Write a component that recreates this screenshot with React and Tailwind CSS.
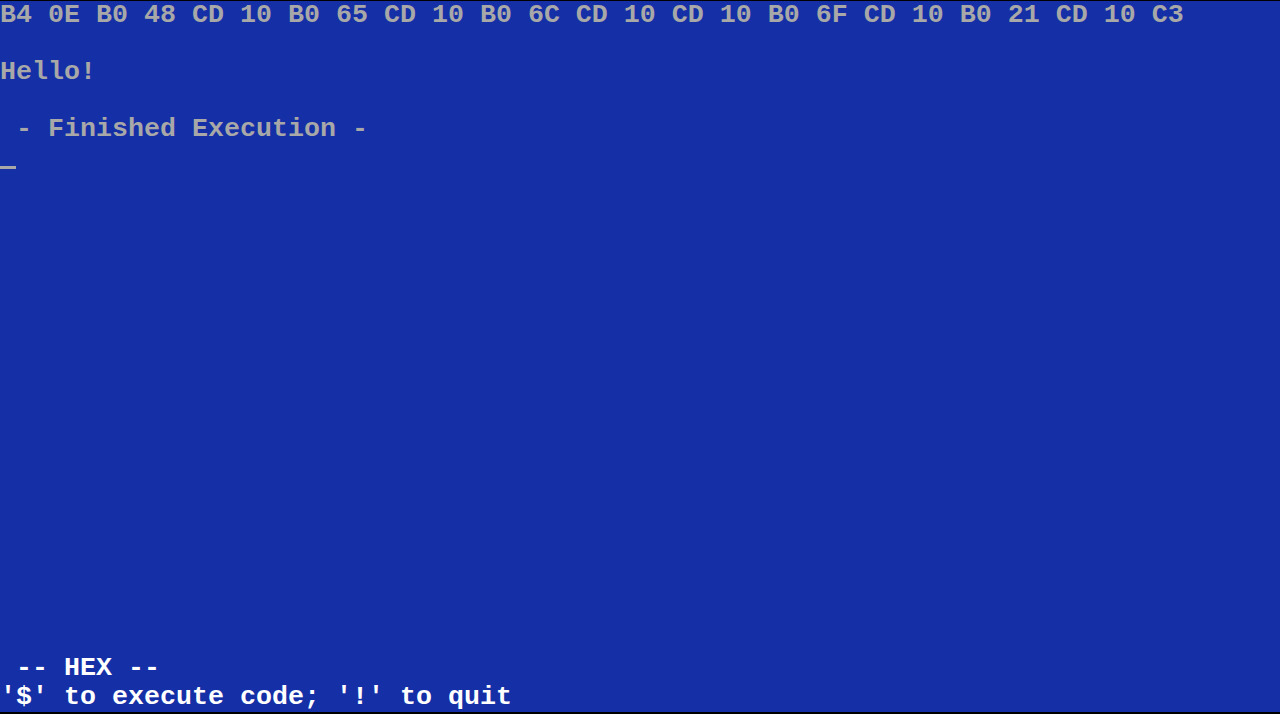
import React from 'react';

// Ligne de sortie façon écran texte DOS (80 colonnes x 25 lignes)
const Line = ({ children, className = '' }) => (
    <div className={`h-[28.4px] whitespace-pre ${className}`}>{children}</div>
);

const App = () => {
    const hex = 'B4 0E B0 48 CD 10 B0 65 CD 10 B0 6C CD 10 CD 10 B0 6F CD 10 B0 21 CD 10 C3';

    return (
        <div
            className="h-screen w-full bg-[#152fa7] border-t border-b-2 border-black flex flex-col justify-between overflow-hidden text-[26.67px] leading-[28.4px] font-bold"
            style={{ fontFamily: '"Liberation Mono", "DejaVu Sans Mono", monospace' }}
        >
            <div className="text-[#a8a8a8]">
                <Line>{hex}</Line>
                <Line>{' '}</Line>
                <Line>Hello!</Line>
                <Line>{' '}</Line>
                <Line>{' - Finished Execution -'}</Line>
                <Line className="flex items-end pb-[2px]">
                    <div className="w-4 h-[3px] bg-[#a8a8a8]" />
                </Line>
            </div>

            <div className="text-white pb-[1px]">
                <Line>{' -- HEX --'}</Line>
                <Line>{"'$' to execute code; '!' to quit"}</Line>
            </div>
        </div>
    );
};

export default App;
